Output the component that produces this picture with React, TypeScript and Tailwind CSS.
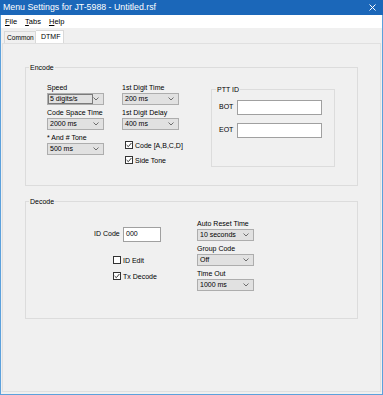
const FONT = "font-['Liberation_Sans',Arial,sans-serif]";

function Chevron() {
  return (
    <svg width="6" height="4" viewBox="0 0 6 4" className="ml-auto shrink-0">
      <polyline points="0.5,0.5 3,3 5.5,0.5" fill="none" stroke="#606060" strokeWidth="0.9" />
    </svg>
  );
}

function Combo({ value, focused = false }: { value: string; focused?: boolean }) {
  return (
    <div className="mt-px flex h-[12px] w-[57px] items-center border border-[#adadad] bg-[#e1e1e1] pr-[4px]">
      {focused ? (
        <span className="flex h-full w-[46px] items-center border border-[#7a7a7a] pl-[1px]">{value}</span>
      ) : (
        <span className="pl-[2px]">{value}</span>
      )}
      <Chevron />
    </div>
  );
}

function Field({ label, value, focused }: { label: string; value: string; focused?: boolean }) {
  return (
    <div className="flex flex-col">
      <span className="h-[9px] whitespace-nowrap leading-[9px]">{label}</span>
      <Combo value={value} focused={focused} />
    </div>
  );
}

function Check({ label, checked }: { label: string; checked?: boolean }) {
  return (
    <div className="flex h-[10px] items-center gap-[2px] whitespace-nowrap">
      <span className="flex h-[8px] w-[8px] shrink-0 items-center justify-center border border-[#333] bg-white">
        {checked && (
          <svg width="6" height="6" viewBox="0 0 6 6">
            <polyline points="0.6,3 2.3,4.7 5.4,1" fill="none" stroke="#222" strokeWidth="0.9" />
          </svg>
        )}
      </span>
      <span className="leading-[9px]">{label}</span>
    </div>
  );
}

function TextBox({ value = "", w }: { value?: string; w: string }) {
  return (
    <div className={`flex h-[15px] ${w} items-center border border-[#a0a0a0] bg-white pl-[2px]`}>
      {value}
    </div>
  );
}

export default function App() {
  return (
    <div className={`flex h-[395px] w-[383px] flex-col bg-[#f0f0f0] text-[7px] text-black ${FONT}`}>
      <div className="flex h-[15px] shrink-0 items-center bg-[#1b67b9] pl-[3px] pr-[7px] text-[8.8px] text-white">
        <span>Menu Settings for JT-5988 - Untitled.rsf</span>
        <svg width="7" height="7" viewBox="0 0 7 7" className="ml-auto">
          <path d="M0.5 0.5 L6.5 6.5 M6.5 0.5 L0.5 6.5" stroke="#fff" strokeWidth="1" />
        </svg>
      </div>

      <div className="flex flex-1 flex-col border-x border-b border-[#5ca1dc]">
        <div className="flex h-[13px] items-center gap-[8px] bg-white pl-[4px] text-[7.5px]">
          <span><u>F</u>ile</span>
          <span><u>T</u>abs</span>
          <span><u>H</u>elp</span>
        </div>

        <div className="flex h-[15px] items-end pl-[3px]">
          <div className="flex h-[12px] w-[32px] items-center border border-b-0 border-[#d9d9d9] bg-[#f0f0f0] pl-[2px] text-[6.6px]">
            Common
          </div>
          <div className="flex h-[13px] w-[28px] items-center border border-b-0 border-l-0 border-[#d9d9d9] bg-white pl-[5px]">
            DTMF
          </div>
        </div>

        <div className="mx-px mb-[2px] flex-1 border border-[#e0e0e0] bg-[#f0f0f0]">
          <fieldset className="ml-[22px] mt-[19px] h-[123px] w-[333px] border border-[#dcdcdc]">
            <legend className="ml-[3px] px-px leading-[9px]">Encode</legend>
            <div className="flex items-start pl-[21px] pt-[11px]">
              <div className="flex w-[57px] shrink-0 flex-col gap-[3px]">
                <Field label="Speed" value="5 digits/s" focused />
                <Field label="Code Space Time" value="2000 ms" />
                <Field label="* And # Tone" value="500 ms" />
              </div>
              <div className="ml-[18px] flex w-[57px] shrink-0 flex-col gap-[3px]">
                <Field label="1st Digit Time" value="200 ms" />
                <Field label="1st Digit Delay" value="400 ms" />
                <div className="ml-[3px] mt-[7px] flex flex-col gap-[5px]">
                  <Check label="Code [A,B,C,D]" checked />
                  <Check label="Side Tone" checked />
                </div>
              </div>
              <fieldset className="ml-[32px] mt-[2px] h-[82px] w-[124px] shrink-0 border border-[#dcdcdc]">
                <legend className="ml-[4px] px-px leading-[9px]">PTT ID</legend>
                <div className="flex flex-col gap-[8px] pl-[7px] pt-[6px]">
                  <div className="flex items-center">
                    <span className="w-[18px]">BOT</span>
                    <TextBox w="w-[85px]" />
                  </div>
                  <div className="flex items-center">
                    <span className="w-[18px]">EOT</span>
                    <TextBox w="w-[85px]" />
                  </div>
                </div>
              </fieldset>
            </div>
          </fieldset>

          <fieldset className="ml-[22px] mt-[11px] h-[122px] w-[333px] border border-[#dcdcdc]">
            <legend className="ml-[3px] px-px leading-[9px]">Decode</legend>
            <div className="flex items-start pl-[68px]">
              <div className="mt-[21px] flex flex-col">
                <div className="flex items-center">
                  <span className="w-[29px]">ID Code</span>
                  <TextBox value="000" w="w-[38px]" />
                </div>
                <div className="ml-[19px] mt-[13px] flex flex-col gap-[6px]">
                  <Check label="ID Edit" />
                  <Check label="Tx Decode" checked />
                </div>
              </div>
              <div className="ml-[36px] mt-[13px] flex flex-col gap-[3px]">
                <Field label="Auto Reset Time" value="10 seconds" />
                <Field label="Group Code" value="Off" />
                <Field label="Time Out" value="1000 ms" />
              </div>
            </div>
          </fieldset>
        </div>
      </div>
    </div>
  );
}
